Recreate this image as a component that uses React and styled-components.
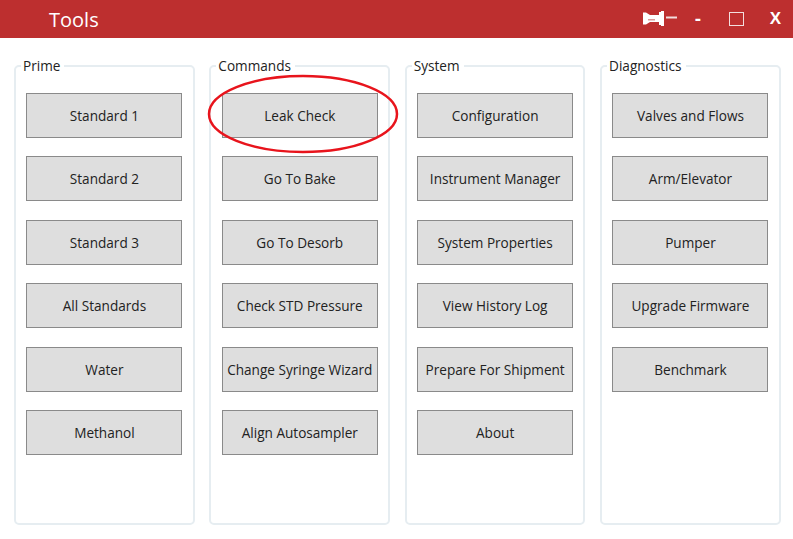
import styled, { createGlobalStyle } from "styled-components";

const groups = [
    { title: "Prime", items: ["Standard 1", "Standard 2", "Standard 3", "All Standards", "Water", "Methanol"] },
    { title: "Commands", items: ["Leak Check", "Go To Bake", "Go To Desorb", "Check STD Pressure", "Change Syringe Wizard", "Align Autosampler"] },
    { title: "System", items: ["Configuration", "Instrument Manager", "System Properties", "View History Log", "Prepare For Shipment", "About"] },
    { title: "Diagnostics", items: ["Valves and Flows", "Arm/Elevator", "Pumper", "Upgrade Firmware", "Benchmark"] },
];

const App = () => {
    return (
        <Main>
            <GlobalStyle />
            <TitleBar>
                <Title>Tools</Title>
                <WindowControls>
                    <PinIcon />
                    <Minimize>-</Minimize>
                    <Maximize />
                    <Close>X</Close>
                </WindowControls>
            </TitleBar>
            <Columns>
                {groups.map((group) => {
                    return (
                        <Group key={group.title}>
                            <Legend>{group.title}</Legend>
                            <ButtonList>
                                {group.items.map((item) => {
                                    return (
                                        <ButtonWrap key={item}>
                                            <ToolButton>{item}</ToolButton>
                                            {item === "Leak Check" && <Circle />}
                                        </ButtonWrap>
                                    )
                                })}
                            </ButtonList>
                        </Group>
                    )
                })}
            </Columns>
        </Main>
    )
}

const PinIcon = () => (
    <PinSvg viewBox="0 0 34 15" width="34" height="15">
        <path d="M0 1.500h3l4 2.500h9V1h2v13h-2v-3H7l-4 2.500H0z" fill="#fff" />
        <rect x="5" y="8" width="7" height="1.500" fill="#d99a9a" />
        <rect x="18" y="0" width="3" height="15" fill="#fff" />
        <rect x="23" y="5.500" width="11" height="2" fill="#f3dede" />
    </PinSvg>
);

const Circle = () => (
    <CircleSvg viewBox="0 0 192 80" width="192" height="80">
        <ellipse cx="96" cy="40" rx="94" ry="38" fill="none" stroke="#e8141c" strokeWidth="2.500" />
    </CircleSvg>
);

const GlobalStyle = createGlobalStyle`
    html, body {
        margin: 0;
        padding: 0;
        background: #fff;
    }
    body {
        font-family: "Open Sans", "Noto Sans", sans-serif;
    }
`;
const Main = styled.div`
    width: 793px;
    height: 539px;
    overflow: hidden;
    background: #fff;
`;
const TitleBar = styled.div`
    display: flex;
    align-items: center;
    justify-content: space-between;
    height: 38px;
    padding-left: 49px;
    background: #bd2f2f;
    color: #fff;
`;
const Title = styled.div`
    font-size: 20px;
`;
const WindowControls = styled.div`
    display: flex;
    align-items: center;
    padding-right: 11px;
`;
const PinSvg = styled.svg`
    margin-right: 17px;
    margin-bottom: 2px;
`;
const Minimize = styled.div`
    width: 8px;
    margin-right: 27px;
    font: bold 19px "Liberation Sans", sans-serif;
    text-align: center;
`;
const Maximize = styled.div`
    box-sizing: border-box;
    width: 15px;
    height: 14px;
    margin-right: 25px;
    border: 1.500px solid #f3dede;
`;
const Close = styled.div`
    width: 13px;
    font: bold 17px "Liberation Sans", sans-serif;
    text-align: center;
`;
const Columns = styled.div`
    display: flex;
    gap: 14.850px;
    padding: 18px 12px 0 14px;
`;
const Group = styled.fieldset`
    box-sizing: border-box;
    flex: none;
    width: 180.500px;
    height: 469px;
    margin: 0;
    padding: 17.600px 10px 0 10.450px;
    border: 2px solid #e6edf1;
    border-radius: 5px;
`;
const Legend = styled.legend`
    margin-left: -5.450px;
    padding: 0 4px 0 2px;
    font-size: 13.600px;
    line-height: 19px;
    color: #222;
`;
const ButtonList = styled.div`
    display: flex;
    flex-direction: column;
    gap: 18.500px;
`;
const ButtonWrap = styled.div`
    position: relative;
`;
const ToolButton = styled.button`
    display: block;
    box-sizing: border-box;
    width: 156px;
    height: 45px;
    padding: 0;
    background: #dedede;
    border: 1px solid #8a8a8a;
    font-family: inherit;
    font-size: 13.600px;
    white-space: nowrap;
    color: #222;
`;
const CircleSvg = styled.svg`
    position: absolute;
    left: -15px;
    top: -19px;
    pointer-events: none;
`;
export default App;
